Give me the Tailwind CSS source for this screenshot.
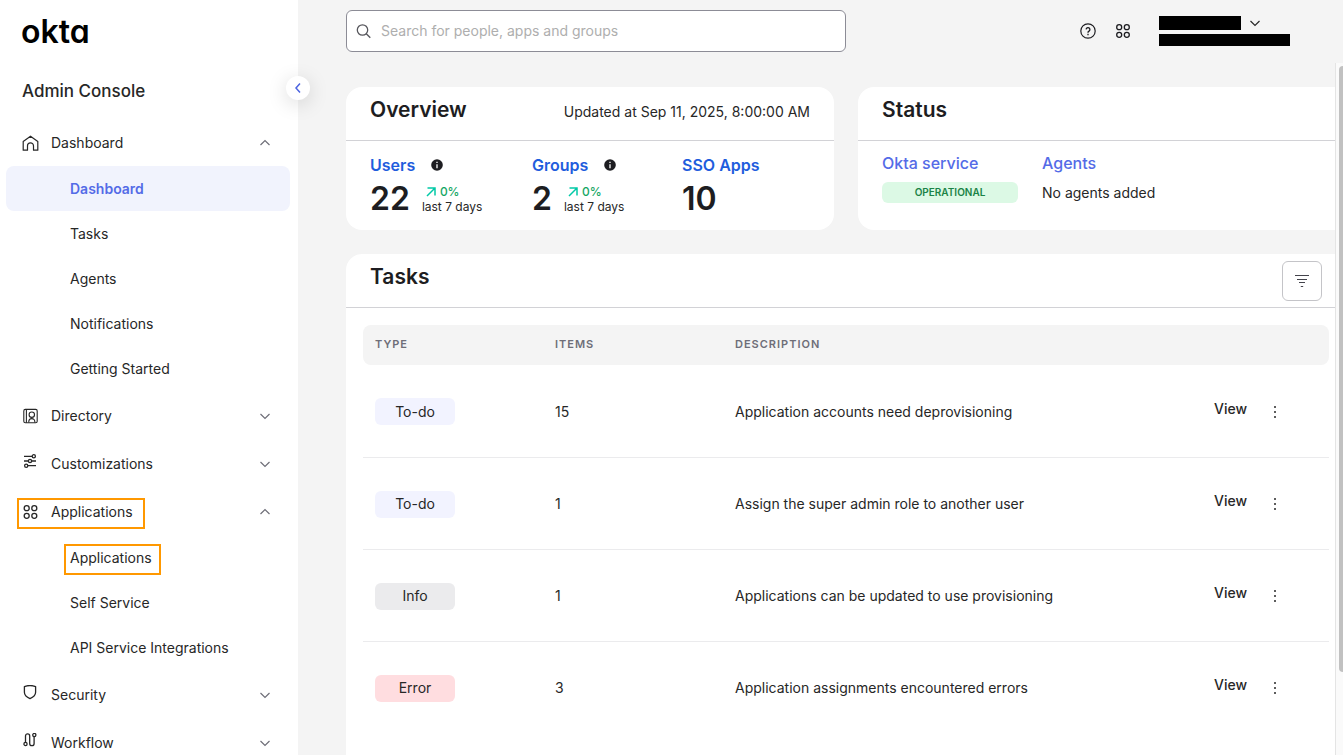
<!DOCTYPE html>
<html lang="en">
  <head>
    <meta charset="UTF-8" />
    <meta name="viewport" content="width=device-width, initial-scale=1.0" />
    <title>Okta Admin Console</title>
    <script src="https://cdn.jsdelivr.net/npm/@tailwindcss/browser@4"></script>
  </head>
  <body class="h-screen flex overflow-hidden bg-[#f4f4f4] font-['Inter','Liberation_Sans',sans-serif] text-sm text-[#272727]">
    <!-- Shared icons -->
    <svg class="hidden">
      <symbol id="down" viewBox="0 0 12 12"><path d="M1.5 4 6 8.5 10.5 4" fill="none" stroke="currentColor" stroke-width="1.2" /></symbol>
      <symbol id="up" viewBox="0 0 12 12"><path d="M1.5 8 6 3.5 10.5 8" fill="none" stroke="currentColor" stroke-width="1.2" /></symbol>
      <symbol id="apps" viewBox="0 0 16 16">
        <g fill="none" stroke="currentColor" stroke-width="1.3">
          <circle cx="4.2" cy="4.2" r="2.5" /><circle cx="11.8" cy="4.2" r="2.5" />
          <circle cx="4.2" cy="11.8" r="2.5" /><circle cx="11.8" cy="11.8" r="2.5" />
        </g>
      </symbol>
      <symbol id="info" viewBox="0 0 12 12">
        <circle cx="6" cy="6" r="5.8" fill="#1d1d21" />
        <path d="M6 5.2v4M6 2.7v1.4" stroke="#fff" stroke-width="1.3" />
      </symbol>
      <symbol id="trend" viewBox="0 0 10 10"><path d="M1 9 9 1M1.5 1H9v7.5" fill="none" stroke="#00c9a7" stroke-width="1.5" /></symbol>
      <symbol id="dots" viewBox="0 0 4 14">
        <g fill="#272727"><circle cx="2" cy="2" r="1" /><circle cx="2" cy="7" r="1" /><circle cx="2" cy="12" r="1" /></g>
      </symbol>
    </svg>

    <!-- Sidebar -->
    <aside class="relative w-[298px] shrink-0 bg-white">
      <a href="#" class="block pl-[21px] pt-3 text-[32px] leading-10 font-semibold text-black [font-feature-settings:'cv11']">okta</a>
      <h1 class="pl-[22px] mt-[27px] text-[17px] leading-6 font-medium">Admin Console</h1>
      <button aria-label="Collapse menu" class="absolute top-[76px] -right-3 z-10 size-6 flex items-center justify-center rounded-full bg-white shadow-[0_4px_20px_rgba(0,0,0,0.15)]">
        <svg class="w-2 h-3" viewBox="0 0 8 12" fill="none" stroke="#4c64e1" stroke-width="1.5"><path d="M6 1.5 2 6l4 4.5" /></svg>
      </button>

      <nav class="mt-[15px]">
        <button class="w-full h-12 flex items-center gap-3 pt-0.5 pl-[22px] pr-[27px]">
          <svg class="w-[17px] h-5" viewBox="0 0 17 20" fill="none" stroke="currentColor" stroke-width="1.2" stroke-linejoin="round"><path d="M1.2 8.6 8.5 3.2l7.3 5.4v8.6h-4.3v-4.4a3 3 0 0 0-6 0v4.4H1.2z" /></svg>
          <span class="flex-1 text-left">Dashboard</span>
          <svg class="size-3 text-[#6e6e78]"><use href="#up" /></svg>
        </button>
        <a href="#" class="h-[45px] flex items-center ml-[6px] mr-2 pl-16 rounded-lg bg-[#f1f3fd] font-semibold text-[#546be7]">Dashboard</a>
        <a href="#" class="h-[45px] flex items-center pl-[70px]">Tasks</a>
        <a href="#" class="h-[45px] flex items-center pl-[70px]">Agents</a>
        <a href="#" class="h-[45px] flex items-center pl-[70px]">Notifications</a>
        <a href="#" class="h-[45px] flex items-center pl-[70px]">Getting Started</a>

        <button class="w-full h-12 flex items-center gap-3 pt-0.5 pl-[22px] pr-[27px]">
          <svg class="w-[17px] h-5" viewBox="0 0 17 20" fill="none" stroke="currentColor" stroke-width="1.1"><rect x="1.8" y="3.4" width="13.4" height="13.4" rx="1.5" /><path d="M4.4 3.4v13.4M6.8 16.4v-.8a3 3 0 0 1 6 0v.8" /><circle cx="9.8" cy="8.7" r="2.7" /></svg>
          <span class="flex-1 text-left">Directory</span>
          <svg class="size-3 text-[#6e6e78]"><use href="#down" /></svg>
        </button>
        <button class="w-full h-12 flex items-center gap-3 pt-0.5 pl-[22px] pr-[27px]">
          <svg class="w-[17px] h-5" viewBox="0 1 17 20" fill="none" stroke="currentColor" stroke-width="1.3"><path d="M2 3.3h8M2 8h4.3M9.7 8H14M5.9 12.7H14" /><circle cx="11.8" cy="3.3" r="1.6" /><circle cx="8" cy="8" r="1.6" /><circle cx="4.2" cy="12.7" r="1.6" /></svg>
          <span class="flex-1 text-left">Customizations</span>
          <svg class="size-3 text-[#6e6e78]"><use href="#down" /></svg>
        </button>
        <button class="relative w-full h-12 flex items-center gap-3 pt-0.5 pl-[22px] pr-[27px]">
          <svg class="w-[17px] h-4"><use href="#apps" /></svg>
          <span class="flex-1 text-left">Applications</span>
          <svg class="size-3 text-[#6e6e78]"><use href="#up" /></svg>
          <span class="absolute left-[17px] top-[11px] w-32 h-[31px] border-2 border-[#ff9800]"></span>
        </button>
        <a href="#" class="relative h-[45px] flex items-center pl-[70px]">
          Applications
          <span class="absolute left-16 top-[9px] w-[97px] h-[31px] border-2 border-[#ff9800]"></span>
        </a>
        <a href="#" class="h-[45px] flex items-center pl-[70px]">Self Service</a>
        <a href="#" class="h-[45px] flex items-center pl-[70px]">API Service Integrations</a>
        <button class="w-full h-12 flex items-center gap-3 pt-0.5 pl-[22px] pr-[27px]">
          <svg class="w-[17px] h-5" viewBox="0 1 17 20" fill="none" stroke="currentColor" stroke-width="1.3" stroke-linejoin="round"><path d="M2.4 2.6Q5 1.5 8 1.5t5.6 1.1v5.6c0 2.8-2.4 5-5.6 6.4-3.2-1.400-5.600-3.600-5.600-6.400z" /></svg>
          <span class="flex-1 text-left">Security</span>
          <svg class="size-3 text-[#6e6e78]"><use href="#down" /></svg>
        </button>
        <button class="w-full h-12 flex items-center gap-3 pt-0.5 pl-[22px] pr-[27px]">
          <svg class="w-[17px] h-5" viewBox="0 1 17 20" fill="none" stroke="currentColor" stroke-width="1.3"><circle cx="3.5" cy="12" r="1.6" /><circle cx="12.3" cy="3" r="1.6" /><path d="M3.500 10.400V4a2.100 2.100 0 0 1 4.200 0v7.500a2.200 2.200 0 0 0 4.400 0v-7" /></svg>
          <span class="flex-1 text-left">Workflow</span>
          <svg class="size-3 text-[#6e6e78]"><use href="#down" /></svg>
        </button>
      </nav>
    </aside>

    <div class="flex-1 min-w-0 flex flex-col">
      <!-- Top bar -->
      <header class="h-[63px] shrink-0 flex items-center pb-0.5 pl-12 pr-[53px]">
        <label class="w-[500px] h-[42px] flex items-center gap-[9px] px-[9px] rounded-md border border-[#8c8c96] bg-white">
          <svg class="size-4 shrink-0" viewBox="0 0 16 16" fill="none" stroke="#56565c" stroke-width="1.3"><circle cx="6.500" cy="7" r="5.200" /><path d="m10.300 10.800 4 4" /></svg>
          <input type="text" aria-label="Search" placeholder="Search for people, apps and groups" class="flex-1 outline-none placeholder:text-[#aeaeae]" />
        </label>
        <div class="ml-auto flex items-center">
          <button aria-label="Help">
            <svg class="size-4" viewBox="0 0 16 16" fill="none" stroke="#1d1d21" stroke-width="1.2"><circle cx="8" cy="8" r="7.2" /><path d="M6.1 6.4a1.9 1.9 0 1 1 2.9 1.7c-.7.4-1 .7-1 1.4v.3M8 10.800v1.400" stroke-width="1.3" /></svg>
          </button>
          <button aria-label="My apps" class="ml-[19px]">
            <svg class="size-4 text-[#1d1d21]"><use href="#apps" /></svg>
          </button>
          <button aria-label="Account" class="ml-7 flex flex-col gap-1">
            <span class="flex items-center gap-2">
              <span class="w-[82px] h-[14px] bg-black"></span>
              <svg class="size-3"><use href="#down" /></svg>
            </span>
            <span class="w-[131px] h-3 bg-black"></span>
          </button>
        </div>
      </header>

      <div class="flex-1 min-h-0 flex">
        <main class="flex-1 min-w-0 flex flex-col gap-6 pl-12 pt-6">
          <div class="flex gap-6">
            <section class="w-[488px] h-[143px] shrink-0 rounded-2xl bg-white">
              <div class="h-[54px] flex items-center justify-between px-6 pb-2 border-b border-[#d2d2d6]">
                <h2 class="text-[21px] leading-7 font-semibold text-[#1d1d21]">Overview</h2>
                <p class="pt-1">Updated at Sep 11, 2025, 8:00:00 AM</p>
              </div>
              <div class="flex px-6 pt-3">
                <div class="w-[162px]">
                  <div class="flex items-center gap-4">
                    <a href="#" class="text-base font-semibold text-[#1f5ddd]">Users</a>
                    <svg class="size-3"><use href="#info" /></svg>
                  </div>
                  <div class="flex items-center gap-3 mt-1">
                    <span class="text-[32px] leading-9 font-semibold text-[#1d1d21]">22</span>
                    <div class="text-xs leading-[15px]">
                      <p class="flex items-center gap-1 pl-1 font-medium text-[#16a765]"><svg class="size-[10px]"><use href="#trend" /></svg>0%</p>
                      <p>last 7 days</p>
                    </div>
                  </div>
                </div>
                <div class="w-[150px]">
                  <div class="flex items-center gap-4">
                    <a href="#" class="text-base font-semibold text-[#1f5ddd]">Groups</a>
                    <svg class="size-3"><use href="#info" /></svg>
                  </div>
                  <div class="flex items-center gap-3 mt-1">
                    <span class="text-[32px] leading-9 font-semibold text-[#1d1d21]">2</span>
                    <div class="text-xs leading-[15px]">
                      <p class="flex items-center gap-1 pl-1 font-medium text-[#16a765]"><svg class="size-[10px]"><use href="#trend" /></svg>0%</p>
                      <p>last 7 days</p>
                    </div>
                  </div>
                </div>
                <div>
                  <a href="#" class="block text-base font-semibold text-[#1f5ddd]">SSO Apps</a>
                  <p class="mt-1 text-[32px] leading-9 font-semibold text-[#1d1d21]">10</p>
                </div>
              </div>
            </section>

            <section class="flex-1 h-[143px] rounded-l-2xl bg-white">
              <div class="h-[54px] flex items-center px-6 pb-2 border-b border-[#d2d2d6]">
                <h2 class="text-[21px] leading-7 font-semibold text-[#1d1d21]">Status</h2>
              </div>
              <div class="flex gap-6 px-6 pt-[10px]">
                <div class="w-[136px]">
                  <a href="#" class="block text-base font-medium text-[#546be7]">Okta service</a>
                  <p class="mt-[7px] h-[21px] flex items-center justify-center rounded-md bg-[#dcf9e5] text-[10px] font-semibold text-[#1b8347]">OPERATIONAL</p>
                </div>
                <div>
                  <a href="#" class="block text-base font-medium text-[#546be7]">Agents</a>
                  <p class="mt-2">No agents added</p>
                </div>
              </div>
            </section>
          </div>

          <section class="flex-1 rounded-tl-2xl bg-white">
            <div class="h-[54px] flex items-center justify-between pl-6 pr-[13px] border-b border-[#d2d2d6]">
              <h2 class="pb-2 text-[21px] leading-7 font-semibold text-[#1d1d21]">Tasks</h2>
              <button aria-label="Filter" class="size-10 flex items-center justify-center rounded-md border border-[#c4c4c8]">
                <svg class="w-[14px] h-3" viewBox="0 0 14 12" stroke="#44444c" stroke-width="1"><path d="M0 .5h14M2 4.500h10M4 7.500h6M5.800 11.500h2.400" /></svg>
              </button>
            </div>
            <div class="pl-[17px] pr-[6px] pt-[17px]">
              <table class="w-full table-fixed text-left">
                <thead>
                  <tr class="h-10 text-[11px] tracking-[1px] text-[#6e6e78]">
                    <th class="w-48 pl-3 rounded-l-lg bg-[#f4f4f4] font-semibold">TYPE</th>
                    <th class="w-[180px] bg-[#f4f4f4] font-semibold">ITEMS</th>
                    <th class="bg-[#f4f4f4] font-semibold">DESCRIPTION</th>
                    <th class="w-[115px] rounded-r-lg bg-[#f4f4f4]"></th>
                  </tr>
                </thead>
                <tbody>
                  <tr class="h-[92px] border-b border-[#ebebed]">
                    <td class="pt-0.5 pl-3"><span class="w-20 h-[27px] flex items-center justify-center rounded-md bg-[#f2f3ff]">To-do</span></td>
                    <td class="pt-0.5">15</td>
                    <td class="pt-0.5">Application accounts need deprovisioning</td>
                    <td class="pt-0.5"><div class="flex items-center gap-[26px]"><a href="#" class="pb-1.5 font-medium">View</a><button aria-label="More"><svg class="w-1 h-[14px]"><use href="#dots" /></svg></button></div></td>
                  </tr>
                  <tr class="h-[92px] border-b border-[#ebebed]">
                    <td class="pt-0.5 pl-3"><span class="w-20 h-[27px] flex items-center justify-center rounded-md bg-[#f2f3ff]">To-do</span></td>
                    <td class="pt-0.5">1</td>
                    <td class="pt-0.5">Assign the super admin role to another user</td>
                    <td class="pt-0.5"><div class="flex items-center gap-[26px]"><a href="#" class="pb-1.5 font-medium">View</a><button aria-label="More"><svg class="w-1 h-[14px]"><use href="#dots" /></svg></button></div></td>
                  </tr>
                  <tr class="h-[92px] border-b border-[#ebebed]">
                    <td class="pt-0.5 pl-3"><span class="w-20 h-[27px] flex items-center justify-center rounded-md bg-[#ebebed]">Info</span></td>
                    <td class="pt-0.5">1</td>
                    <td class="pt-0.5">Applications can be updated to use provisioning</td>
                    <td class="pt-0.5"><div class="flex items-center gap-[26px]"><a href="#" class="pb-1.5 font-medium">View</a><button aria-label="More"><svg class="w-1 h-[14px]"><use href="#dots" /></svg></button></div></td>
                  </tr>
                  <tr class="h-[92px]">
                    <td class="pt-0.5 pl-3"><span class="w-20 h-[27px] flex items-center justify-center rounded-md bg-[#ffdde0]">Error</span></td>
                    <td class="pt-0.5">3</td>
                    <td class="pt-0.5">Application assignments encountered errors</td>
                    <td class="pt-0.5"><div class="flex items-center gap-[26px]"><a href="#" class="pb-1.5 font-medium">View</a><button aria-label="More"><svg class="w-1 h-[14px]"><use href="#dots" /></svg></button></div></td>
                  </tr>
                </tbody>
              </table>
            </div>
          </section>
        </main>

        <!-- Scrollbar -->
        <div class="w-2 shrink-0 pl-[3px] pt-[3px] border-l border-[#e4e4e4] bg-[#fafafa]">
          <div class="h-[606px] rounded-l-sm bg-[#c1c1c1]"></div>
        </div>
      </div>
    </div>
  </body>
</html>
